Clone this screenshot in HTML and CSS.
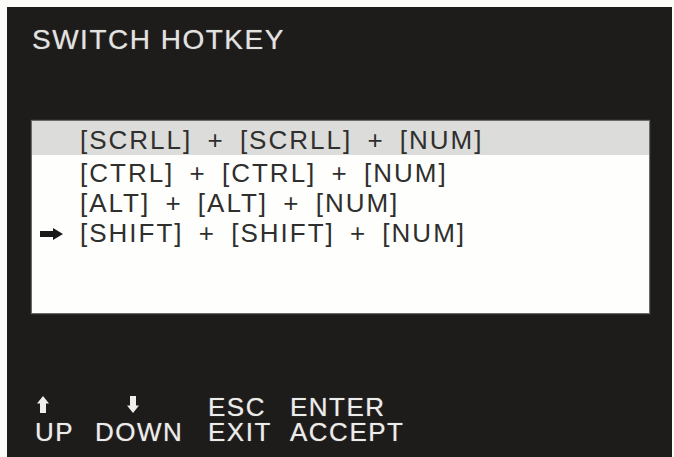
FILE: index.html
```html
<!DOCTYPE html>
<html lang="en">
<head>
<meta charset="utf-8">
<title>Switch Hotkey</title>
<link rel="stylesheet" href="styles.css">
</head>
<body>
<div class="screen">
  <div class="title">SWITCH HOTKEY</div>

  <div class="panel">
    <div class="row sel"><span class="mark"></span><span class="keys">[SCRLL] + [SCRLL] + [NUM]</span></div>
    <div class="row"><span class="mark"></span><span class="keys">[CTRL] + [CTRL] + [NUM]</span></div>
    <div class="row"><span class="mark"></span><span class="keys">[ALT] + [ALT] + [NUM]</span></div>
    <div class="row"><span class="mark">
      <svg class="arrow-right" width="23" height="12" viewBox="0 0 23 12"><path d="M0 3H13V0L23 6L13 12V9H0Z" fill="#1a1a1a"/></svg>
    </span><span class="keys">[SHIFT] + [SHIFT] + [NUM]</span></div>
  </div>

  <div class="legend">
    <div class="cell c1"><svg class="arrow-v" width="12" height="17" viewBox="0 0 12 17"><path d="M6 0L12 7.5H9V17H3V7.5H0Z" fill="#eeeeec"/></svg></div>
    <div class="cell c2"><svg class="arrow-v down" width="12" height="17" viewBox="0 0 12 17"><path d="M6 17L12 9.5H9V0H3V9.5H0Z" fill="#eeeeec"/></svg></div>
    <div class="cell c3">ESC</div>
    <div class="cell c4">ENTER</div>
    <div class="cell c1">UP</div>
    <div class="cell c2">DOWN</div>
    <div class="cell c3">EXIT</div>
    <div class="cell c4">ACCEPT</div>
  </div>
</div>
</body>
</html>
```
FILE: styles.css
```css
html, body {
  margin: 0;
  padding: 0;
  background: #fdfbf8;
}

body {
  font-family: "Liberation Sans", Arial, sans-serif;
}

.screen {
  margin: 7px 2px 0 7px;
  height: 450px;
  background: #1e1c1a;
  display: flex;
  flex-direction: column;
  padding: 18px 0 12px;
  box-sizing: border-box;
}

.title {
  padding-left: 25px;
  font-size: 28px;
  line-height: 30px;
  letter-spacing: 1.5px;
  color: #e2e2e0;
  text-shadow: 0 0 1px rgba(255, 255, 255, 0.5);
}

.panel {
  margin: 66px 23px 0 25px;
  height: 192px;
  background: #fefefd;
  box-shadow: 0 0 1px 1px rgba(160, 160, 160, 0.6);
}

.row {
  display: flex;
  align-items: center;
  height: 30px;
  padding-left: 8px;
  font-size: 26px;
  line-height: 30px;
  letter-spacing: 2px;
  word-spacing: 6px;
  color: #2f2f2d;
}

.row.sel {
  background: #dcdcda;
  padding-top: 4px;
  height: 30px;
  margin-bottom: 3px;
}

.mark {
  width: 40px;
  flex: none;
  display: flex;
  align-items: center;
}

.arrow-right {
  display: block;
  margin-top: 1px;
}

.legend {
  margin-top: auto;
  padding-left: 28px;
  display: grid;
  grid-template-columns: 60px 113px 82px auto;
  grid-auto-rows: 25px;
  font-size: 26px;
  line-height: 25px;
  letter-spacing: 1.5px;
  color: #ececea;
  text-shadow: 0 0 1px rgba(255, 255, 255, 0.5);
}

.cell {
  white-space: nowrap;
}

.arrow-v {
  display: block;
  margin-top: 1px;
  margin-left: 2px;
}

.arrow-v.down {
  margin-left: 32px;
}
```
